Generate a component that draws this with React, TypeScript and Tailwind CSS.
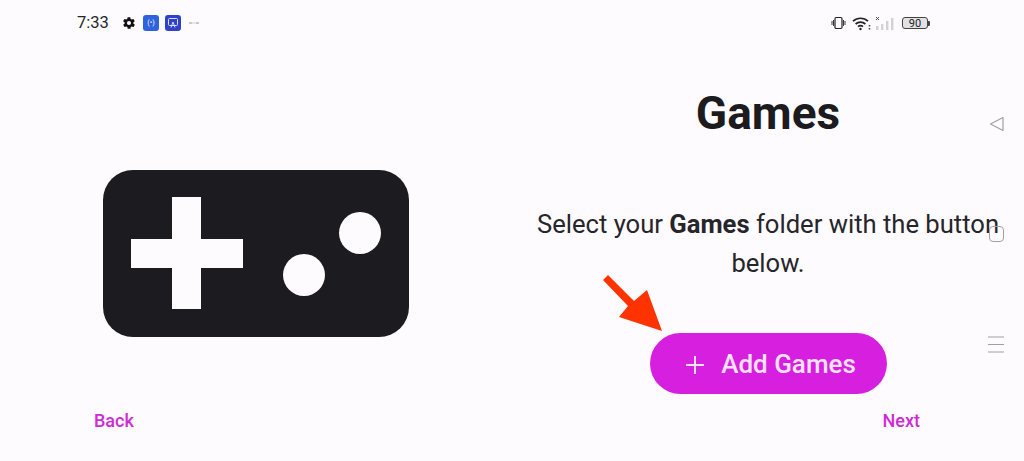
function Controller() {
  return (
    <svg width="306" height="167" viewBox="0 0 306 167" className="block">
      <rect width="306" height="167" rx="30" fill="#1c1b20" />
      <path d="M69 27h29v42h42v29H98v41H69V98H28V69h41z" fill="#fefbff" />
      <circle cx="257" cy="63" r="21" fill="#fefbff" />
      <circle cx="201" cy="105" r="21" fill="#fefbff" />
    </svg>
  )
}

function StatusBar() {
  return (
    <div className="flex h-[46px] items-center justify-between pl-[77px] pr-[94px]">
      <div className="flex items-center">
        <span className="w-[45px] text-[16.5px] text-[#26252a]">7:33</span>
        <svg width="14" height="14" viewBox="0 0 24 24">
          <path
            fill="#111"
            d="M19.4 13a7.6 7.6 0 0 0 0-2l2.1-1.6a.5.5 0 0 0 .1-.7l-2-3.4a.5.5 0 0 0-.6-.2l-2.5 1a7.3 7.3 0 0 0-1.7-1l-.4-2.7a.5.5 0 0 0-.5-.4h-4a.5.5 0 0 0-.5.4l-.4 2.7a7.3 7.3 0 0 0-1.7 1l-2.5-1a.5.5 0 0 0-.6.2l-2 3.4a.5.5 0 0 0 .1.7L4.6 11a7.6 7.6 0 0 0 0 2l-2.1 1.6a.5.5 0 0 0-.1.7l2 3.4c.1.2.4.3.6.2l2.5-1c.5.4 1.1.7 1.7 1l.4 2.7c0 .2.2.4.5.4h4c.3 0 .5-.2.5-.4l.4-2.7c.6-.3 1.2-.6 1.7-1l2.5 1c.2.1.5 0 .6-.2l2-3.4a.5.5 0 0 0-.1-.7zM12 15.5a3.5 3.5 0 1 1 0-7 3.5 3.5 0 0 1 0 7z"
          />
        </svg>
        <div className="ml-[7px] flex h-[16px] w-[16px] items-center justify-center rounded-[3px] bg-[#2f62dc] text-[7px] leading-none font-bold text-[#cfe0ff]">
          (•)
        </div>
        <div className="ml-[6px] flex h-[16px] w-[16px] items-center justify-center rounded-[3px] bg-[#2f42c8]">
          <svg width="10" height="10" viewBox="0 0 10 10" fill="none" stroke="#d5dcff" strokeWidth="1">
            <rect x="0.5" y="0.5" width="9" height="7" rx="1" />
            <path d="M3 9.5 5 4l2 5.5" />
          </svg>
        </div>
        <div className="ml-[8px] h-[2px] w-[10px] border-x-[3px] border-[#c9c8cc] bg-[#e6e5e9]" />
      </div>
      <div className="flex items-center">
        <svg width="15" height="14" viewBox="0 0 15 14" fill="none" stroke="#222" strokeWidth="1.2">
          <rect x="4" y="1.5" width="7" height="11" rx="1.2" />
          <path d="M1 5v4M2.5 4v6M14 5v4M12.5 4v6" strokeWidth="0.9" />
        </svg>
        <svg width="20" height="15" viewBox="0 0 20 15" className="ml-[6px]" fill="none" stroke="#222" strokeWidth="1.7">
          <path d="M1 5.2a11 11 0 0 1 15 0M3.6 8a7.4 7.4 0 0 1 9.8 0M6 10.7a3.7 3.7 0 0 1 5 0" />
          <circle cx="8.5" cy="13" r="1.2" fill="#222" stroke="none" />
          <path d="M17.5 9v1.4M17.5 12v1.4" stroke="#444" strokeWidth="1.6" />
        </svg>
        <svg width="20" height="15" viewBox="0 0 20 15" className="ml-[3px]">
          <path d="M1 1l3 3M4 1 1 4" stroke="#555" strokeWidth="1" />
          <rect x="1" y="10" width="2.4" height="4" fill="#d2d1d5" />
          <rect x="6" y="8" width="2.4" height="6" fill="#d2d1d5" />
          <rect x="11" y="5" width="2.4" height="9" fill="#d2d1d5" />
          <rect x="16" y="2" width="2.4" height="12" fill="#d2d1d5" />
        </svg>
        <div className="ml-[7px] flex h-[12px] w-[26px] items-center justify-center rounded-[3px] border border-[#444] bg-[#e2e1e5] text-[11px] leading-none text-[#222]">
          90
        </div>
        <div className="h-[5px] w-[2px] rounded-r-[1px] bg-[#444]" />
      </div>
    </div>
  )
}

export default function App() {
  return (
    <div className="relative flex h-[461px] w-[1024px] flex-col overflow-hidden bg-[#fefbff] font-['Roboto',sans-serif]">
      <StatusBar />

      <div className="grid h-[348px] grid-cols-2">
        <div className="flex items-start justify-center pt-[124px]">
          <Controller />
        </div>
        <div className="flex flex-col items-center">
          <h1 className="mt-[39px] text-[46px] leading-[56px] font-bold text-[#1c1b20]">Games</h1>
          <p className="mt-[64px] w-[480px] text-center text-[25.6px] leading-[39px] text-[#26252a]">
            Select your <span className="font-bold">Games</span> folder with the button below.
          </p>
          <button
            type="button"
            className="mt-[50px] flex h-[61px] w-[237px] items-center justify-center gap-[17px] rounded-full bg-[#d61fdf] pl-[6px] pt-[2px] text-[26px] font-medium text-[#f9e2fb]"
          >
            <svg width="18" height="18" viewBox="0 0 18 18" stroke="#f9e2fb" strokeWidth="2">
              <path d="M9 0v18M0 9h18" />
            </svg>
            Add Games
          </button>
        </div>
      </div>

      <div className="flex justify-between pt-[15px] pl-[94px] pr-[104px]">
        <span className="text-[18px] leading-[24px] font-medium text-[#cd2bd6]">Back</span>
        <span className="text-[18px] leading-[24px] font-medium text-[#cd2bd6]">Next</span>
      </div>

      {/* arrow sits over the button corner */}
      <svg width="70" height="65" viewBox="0 0 70 65" className="absolute top-[272px] left-[600px]">
        <path d="M3 8 8 3l26 26 13-11 15 41-43-14 9-11z" fill="#ff3300" />
      </svg>

      {/* system nav buttons float over the page */}
      <div className="absolute top-[116px] left-[988px] flex h-[237px] flex-col items-center justify-between text-[#a0a0a4]">
        <svg width="15" height="16" viewBox="0 0 15 16" fill="none" stroke="currentColor" strokeWidth="1.2">
          <path d="M14 1.5v13L1.5 8z" strokeLinejoin="round" />
        </svg>
        <div className="h-[16px] w-[15px] rounded-[4px] border border-[#a0a0a4]" />
        <svg width="16" height="17" viewBox="0 0 16 17" stroke="currentColor" strokeWidth="1.2">
          <path d="M0 1h16M0 8.5h16M0 16h16" />
        </svg>
      </div>
    </div>
  )
}
